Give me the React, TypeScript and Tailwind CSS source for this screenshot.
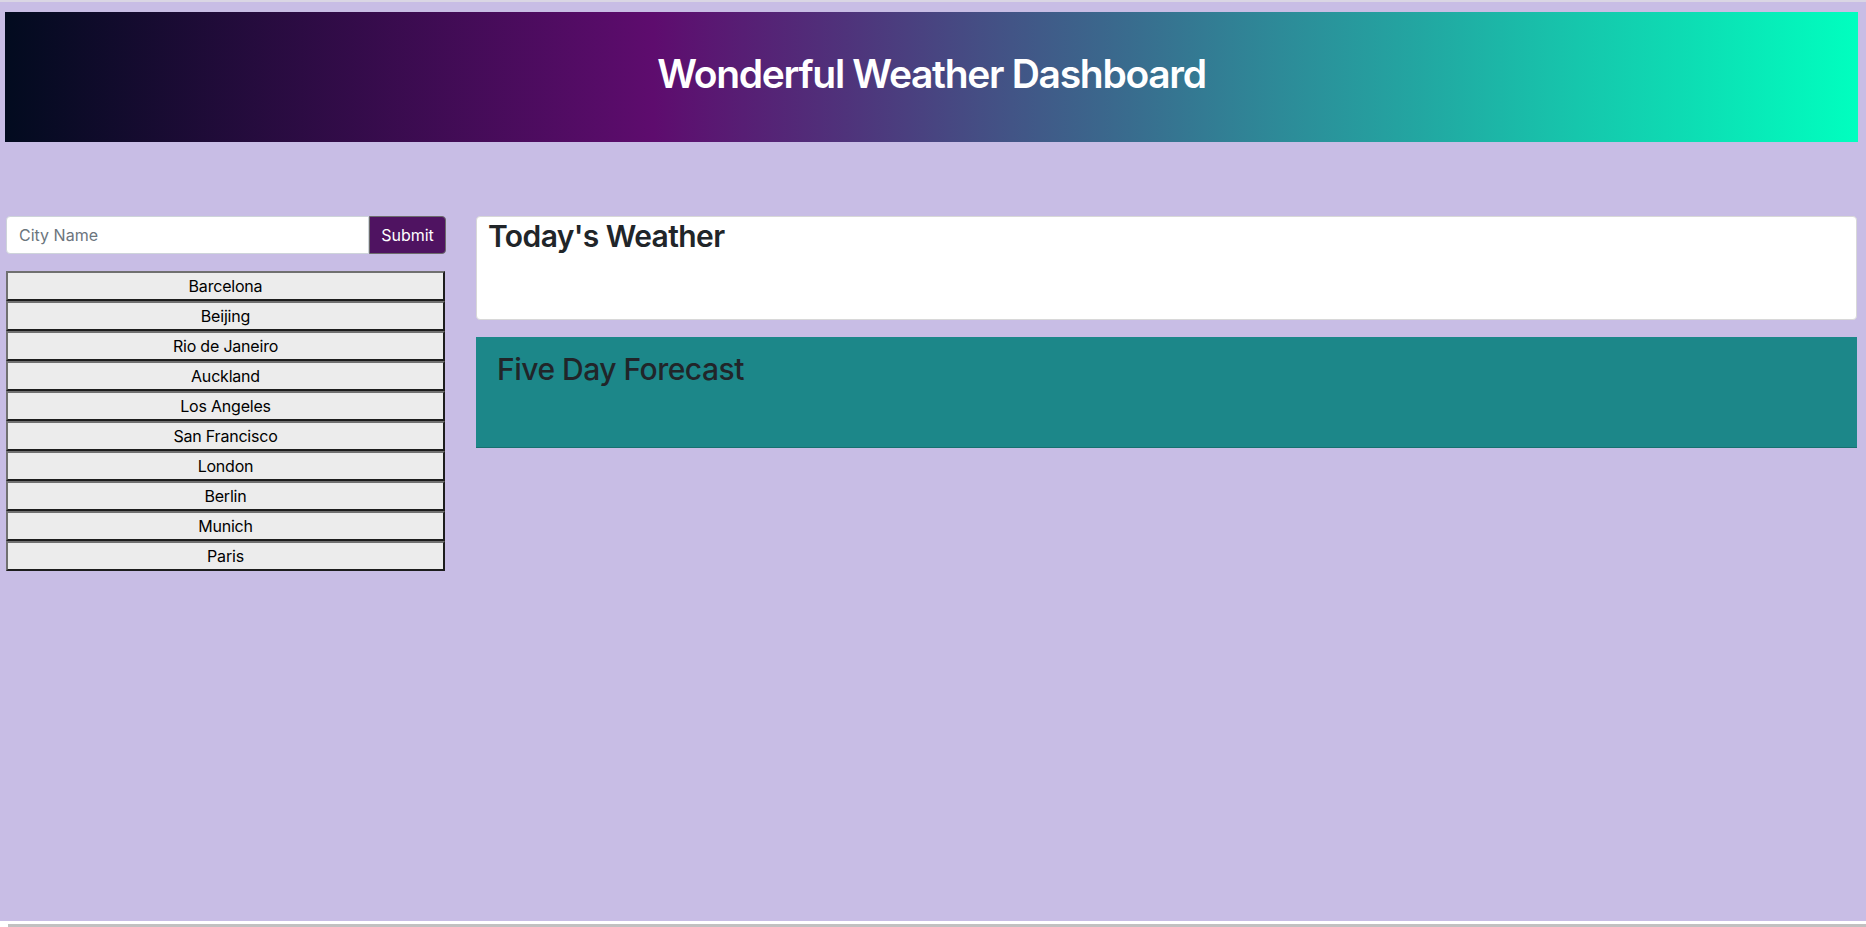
import React from "react";

const cities = [
  "Barcelona",
  "Beijing",
  "Rio de Janeiro",
  "Auckland",
  "Los Angeles",
  "San Francisco",
  "London",
  "Berlin",
  "Munich",
  "Paris",
];

export default function App() {
  return (
    <div
      className="w-[1866px] h-[927px] flex flex-col bg-[#c8bde5] overflow-hidden"
      style={{ fontFamily: "Inter, 'Noto Sans', sans-serif" }}
    >
      <div className="h-[2px] bg-[#dad6e4]" />
      <div className="flex-1 flex flex-col">
        <header className="mt-[10px] ml-[5px] mr-[8px] h-[130px] flex items-center justify-center bg-[linear-gradient(to_right,#020b1f_0%,#5e0c6e_35%,#00ffbf_100%)]">
          <h1 className="text-[39px] font-semibold text-white leading-[1.2] -mt-[6px] tracking-[-1.3px]">
            Wonderful Weather Dashboard
          </h1>
        </header>

        <main className="mt-[74px] flex gap-[30px] pl-[6px] pr-[9px]">
          <aside className="w-[440px] shrink-0 flex flex-col">
            <div className="flex h-[38px]">
              <input
                className="flex-1 min-w-0 h-full rounded-l-[4px] border border-[#ced4da] bg-white pl-[12px] text-[16px] text-[#212529] placeholder:text-[#6c757d] outline-none"
                placeholder="City Name"
              />
              <button className="w-[77px] h-full rounded-r-[4px] bg-[#4f1361] border border-[#6c6c6c] text-white text-[16px]">
                Submit
              </button>
            </div>
            <div className="mt-[17px] flex flex-col">
              {cities.map((c) => (
                <button
                  key={c}
                  className="w-[439px] h-[30px] bg-[#ececec] border-2 border-t-[#707070] border-l-[#707070] border-b-[#1d1d1d] border-r-[#1d1d1d] text-[16px] leading-[24px] text-black flex items-center justify-center tracking-[-0.2px]"
                >
                  {c}
                </button>
              ))}
            </div>
          </aside>

          <section className="flex-1 flex flex-col">
            <div className="h-[104px] bg-white border border-[#d8d8d8] rounded-[4px] pl-[11px] pt-[1px]">
              <h2 className="text-[30px] font-semibold text-[#212529] leading-[1.2] tracking-[-0.6px]">
                Today's Weather
              </h2>
            </div>
            <div className="mt-[17px] h-[111px] bg-[#1c8789] border-b border-[#17706f] pl-[21px] pt-[14px]">
              <h2 className="text-[30px] font-medium text-[#212529] leading-[1.2] tracking-[-0.5px]">
                Five Day Forecast
              </h2>
            </div>
          </section>
        </main>
      </div>
      <div className="h-[6px] bg-white flex flex-col">
        <div className="mt-[3px] ml-[8px] h-[3px] bg-[#c1c1c1]" />
      </div>
    </div>
  );
}
